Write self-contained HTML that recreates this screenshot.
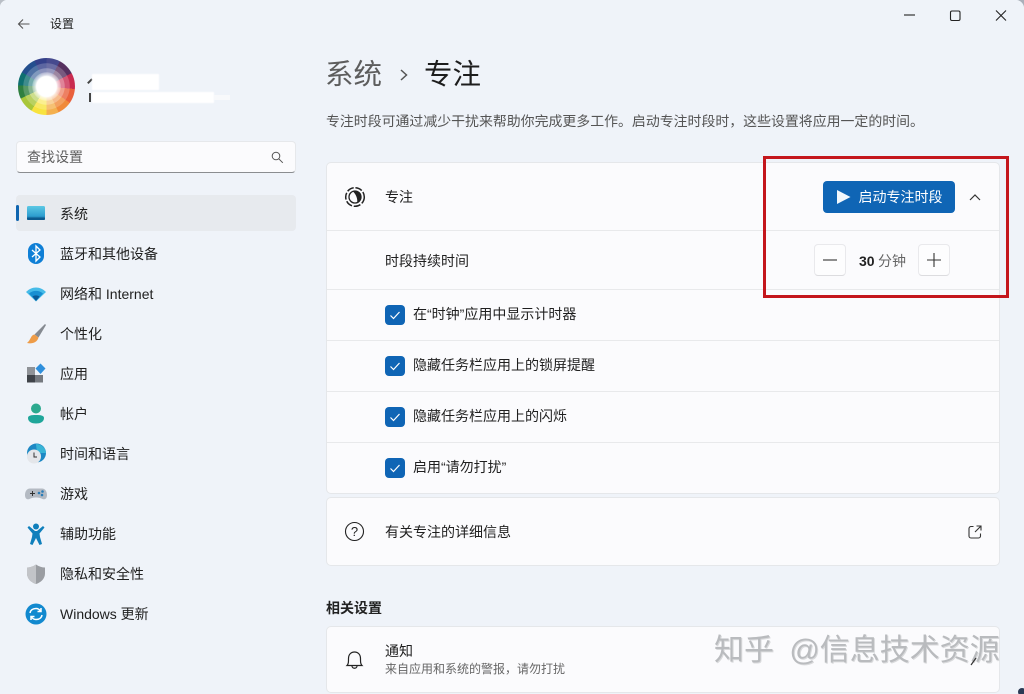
<!DOCTYPE html>
<html lang="zh"><head><meta charset="utf-8"><title>设置</title>
<style>
*{box-sizing:border-box}
html,body{margin:0;padding:0;width:1024px;height:694px;overflow:hidden}
body{position:relative;background:#eff3f9;font-family:"Liberation Sans","Noto Sans CJK SC",sans-serif;font-size:14px;color:#1f1f1f}
.t{position:absolute;white-space:nowrap;line-height:20px}
.a{position:absolute}
.card{position:absolute;left:326px;width:674px;background:#fbfbfd;border:1px solid #e5e7ea;border-radius:5px}
.hr{position:absolute;left:327px;width:672px;height:1px;background:#e8e9eb}
.cb{position:absolute;left:385px;width:20px;height:20px;background:#0f65b5;border-radius:4px}
.cb svg{display:block}
.btn{position:absolute;top:244px;width:32px;height:32px;background:#fdfdfe;border:1px solid #e9e9ec;border-bottom-color:#dcdcdf;border-radius:4px}
.nav{left:60px}
.i{position:absolute;left:24px;width:24px;height:24px}
</style></head><body>

<svg class="a" style="left:0;top:0" width="6" height="6" viewBox="0 0 6 6"><path d="M0 0H6C3 0.500 0.500 3 0 6Z" fill="#b9bec6"/></svg>
<svg class="a" style="left:1017px;top:0" width="7" height="7" viewBox="0 0 7 7"><path d="M0 0H7V7C6.500 3.500 3.500 0.500 0 0Z" fill="#aab0ba"/></svg>

<svg class="a" style="left:16px;top:15px" width="16" height="18" viewBox="0 0 16 18"><path d="M13.500 9H2.500M7 4.500L2.500 9L7 13.500" fill="none" stroke="#555" stroke-width="1.100"/></svg>
<div class="t" style="left:50px;top:14px;font-size:12px">设置</div>

<svg class="a" style="left:904px;top:9px" width="110" height="14" viewBox="0 0 110 14">
<path d="M0 6H11" stroke="#222" stroke-width="1.100"/>
<rect x="46.500" y="2" width="9.500" height="9.500" rx="1.500" fill="none" stroke="#222" stroke-width="1.100"/>
<path d="M92 1.500L102 11.500M102 1.500L92 11.500" stroke="#222" stroke-width="1.100"/></svg>

<!-- avatar -->
<div class="a" style="left:18px;top:58px;width:57px;height:57px;border-radius:50%;background:conic-gradient(#464a8e 0deg 28deg,#56305f 28deg 62deg,#c92b50 62deg 95deg,#e9603c 95deg 125deg,#f08a3a 125deg 155deg,#f4b04f 155deg 180deg,#f8e33f 180deg 212deg,#a9c63a 212deg 245deg,#2f7f3f 245deg 272deg,#0f6f70 272deg 300deg,#244f8e 300deg 335deg,#34408a 335deg 360deg)"></div>
<div class="a" style="left:18px;top:58px;width:57px;height:57px;border-radius:50%;background:radial-gradient(circle,#fff 0,#fff 10px,rgba(255,255,255,.8) 11.500px,rgba(255,255,255,.6) 14px,rgba(255,255,255,.42) 14.500px,rgba(255,255,255,.42) 18px,rgba(255,255,255,.2) 18.500px,rgba(255,255,255,.2) 23px,rgba(255,255,255,0) 23.500px)"></div>
<div class="a" style="left:89px;top:78px;width:1.500px;height:6px;background:#444;transform:rotate(45deg)"></div>
<div class="a" style="left:92px;top:74px;width:67px;height:16px;background:#fff;filter:blur(.6px)"></div>
<div class="a" style="left:89px;top:93px;width:1.500px;height:9px;background:#444"></div>
<div class="a" style="left:92px;top:92px;width:122px;height:11px;background:#fff;filter:blur(.6px)"></div>
<div class="a" style="left:214px;top:95px;width:16px;height:5px;background:#f8f9fb"></div>

<!-- search -->
<div class="a" style="left:16px;top:141px;width:280px;height:32px;background:#fbfbfd;border:1px solid #e6e8eb;border-bottom:1px solid #8b8d90;border-radius:4px"></div>
<div class="t" style="left:27px;top:147px;color:#5f5f5f">查找设置</div>
<svg class="a" style="left:271px;top:151px" width="13" height="13" viewBox="0 0 13 13"><circle cx="5" cy="5" r="3.800" fill="none" stroke="#555" stroke-width="1"/><path d="M7.800 7.800L11.800 11.800" stroke="#555" stroke-width="1"/></svg>

<!-- sidebar -->
<div class="a" style="left:16px;top:195px;width:280px;height:36px;background:#e7eaee;border-radius:4px"></div>
<div class="a" style="left:16px;top:205px;width:3px;height:16px;background:#0f65b0;border-radius:2px"></div>

<svg class="i" style="top:201px" viewBox="0 0 24 24"><defs><linearGradient id="g1" x1="0" y1="0" x2="0" y2="1"><stop offset="0" stop-color="#5cc8e4"/><stop offset=".7" stop-color="#2f9fd0"/><stop offset="1" stop-color="#0d5f95"/></linearGradient></defs><rect x="3" y="5" width="18" height="14" rx="1.500" fill="url(#g1)"/><rect x="3" y="16.500" width="18" height="2.500" rx="1" fill="#0c5a8f"/></svg>
<div class="t nav" style="top:204px">系统</div>

<svg class="i" style="top:242px" viewBox="0 0 24 24"><rect x="4" y="1" width="16" height="21" rx="8" fill="#0f7fd6"/><path d="M8 8L16 15L12 19V4L16 8L8 15" fill="none" stroke="#fff" stroke-width="1.300"/></svg>
<div class="t nav" style="top:244px">蓝牙和其他设备</div>

<svg class="i" style="top:282px" viewBox="0 0 24 24"><path d="M2 10C8 4 16 4 22 10L12 19.500Z" fill="#46bbe8"/><path d="M5 11.500C9 8 15 8 19 11.500L12 19Z" fill="#178fd2"/><path d="M8.500 14.500C10.500 13 13.500 13 15.500 14.500L12 19Z" fill="#0a5a98"/></svg>
<div class="t nav" style="top:284px">网络和 Internet</div>

<svg class="i" style="top:322px" viewBox="0 0 24 24"><path d="M21 2L22 3L14.500 15.500L10.500 12.500Z" fill="#858a91"/><path d="M10.500 12.500C6.500 13 7 18 3 21C7.500 22 13 21 14.500 15.500Z" fill="#ee9c48"/></svg>
<div class="t nav" style="top:324px">个性化</div>

<svg class="i" style="top:362px" viewBox="0 0 24 24"><rect x="3" y="5" width="8" height="8" fill="#8f9297"/><rect x="3" y="13" width="8" height="7.500" fill="#3f4349"/><rect x="11" y="13" width="8" height="7.500" fill="#75797f"/><path d="M16.500 1.500L21.500 6.500L16.500 12L11.500 6.500Z" fill="#2f8fdc"/></svg>
<div class="t nav" style="top:364px">应用</div>

<svg class="i" style="top:402px" viewBox="0 0 24 24"><circle cx="12" cy="6.500" r="5" fill="#2ca98f"/><path d="M4 16C4 13.500 7 13 12 13S20 13.500 20 16C20 20 16 21.500 12 21.500S4 20 4 16Z" fill="#1fa69a"/></svg>
<div class="t nav" style="top:404px">帐户</div>

<svg class="i" style="top:442px" viewBox="0 0 24 24"><circle cx="12.500" cy="11" r="9.500" fill="#1d88c4"/><path d="M12 2C17 2 22 6 22 11H13Z" fill="#39b4d6"/><circle cx="10" cy="14.500" r="7" fill="#e4e6ea"/><path d="M10 10.500V15H13" fill="none" stroke="#333" stroke-width="1"/></svg>
<div class="t nav" style="top:444px">时间和语言</div>

<svg class="i" style="top:482px" viewBox="0 0 24 24"><path d="M6 6.500H18C21.500 6.500 23 10 23 13C23 16.500 21 18 18.500 17C16.500 16 15 15.500 12 15.500S7.500 16 5.500 17C3 18 1 16.500 1 13C1 10 2.500 6.500 6 6.500Z" fill="#b4bac3"/><path d="M6 11.500H11M8.500 9V14" stroke="#333" stroke-width="1"/><circle cx="15" cy="11" r="1.300" fill="#2a7cb8"/><circle cx="18.500" cy="9.500" r="1.300" fill="#2a7cb8"/><circle cx="18" cy="13" r="1.300" fill="#2a7cb8"/></svg>
<div class="t nav" style="top:484px">游戏</div>

<svg class="i" style="top:522px" viewBox="0 0 24 24"><circle cx="12" cy="4.500" r="3" fill="#0f7fbc"/><path d="M3.500 5.500L5 4L11 9H13L19 4L20.500 5.500L15.500 11.500L16 15L18 22L15.500 23L12 16L8.500 23L6 22L8 15L8.500 11.500Z" fill="#0f7fbc"/></svg>
<div class="t nav" style="top:524px">辅助功能</div>

<svg class="i" style="top:562px" viewBox="0 0 24 24"><path d="M12 2.500C15 4.500 18 5.500 21 5.500V11.500C21 16.500 17 20.500 12 22C7 20.500 3 16.500 3 11.500V5.500C6 5.500 9 4.500 12 2.500Z" fill="#9a9da2"/><path d="M12 2.500V22C7 20.500 3 16.500 3 11.500V5.500C6 5.500 9 4.500 12 2.500Z" fill="#c2c4c8"/></svg>
<div class="t nav" style="top:564px">隐私和安全性</div>

<svg class="i" style="top:602px" viewBox="0 0 24 24"><circle cx="12" cy="12" r="10.500" fill="#1289cf"/><path d="M6 11C6.500 8 9 6.500 12 6.500C14 6.500 15.500 7.500 16.500 9M17 6V9.500H13.500M18 13C17.500 16 15 17.500 12 17.500C10 17.500 8.500 16.500 7.500 15M7 18V14.500H10.500" fill="none" stroke="#fff" stroke-width="1.500"/></svg>
<div class="t nav" style="top:604px">Windows 更新</div>

<!-- heading -->
<div class="t" style="left:325px;top:56px;font-size:28.500px;line-height:38px;color:#5d5d5d">系统</div>
<svg class="a" style="left:398px;top:67px" width="12" height="16" viewBox="0 0 12 16"><path d="M3 3L8.500 8L3 13" fill="none" stroke="#555" stroke-width="1.500"/></svg>
<div class="t" style="left:424px;top:56px;font-size:28.500px;line-height:38px;color:#1d1d1d">专注</div>
<div class="t" style="left:326px;top:111px;font-size:13.920px;color:#555">专注时段可通过减少干扰来帮助你完成更多工作。启动专注时段时，这些设置将应用一定的时间。</div>

<!-- main card -->
<div class="card" style="top:162px;height:332px"></div>
<div class="hr" style="top:230px"></div>
<div class="hr" style="top:289px"></div>
<div class="hr" style="top:340px"></div>
<div class="hr" style="top:391px"></div>
<div class="hr" style="top:442px"></div>

<svg class="a" style="left:344px;top:186px" width="22" height="22" viewBox="0 0 22 22"><circle cx="11" cy="11" r="9.300" fill="none" stroke="#222" stroke-width="1.500" stroke-dasharray="7 1.800"/><circle cx="11" cy="11" r="6" fill="none" stroke="#222" stroke-width="1.300"/><path d="M8.800 5.400A6 6 0 1 1 13.200 16.600C13.800 13 12 8 8.800 5.400Z" fill="#222"/></svg>
<div class="t" style="left:385px;top:187px">专注</div>

<div class="a" style="left:823px;top:181px;width:132px;height:32px;background:#0f65b5;border-radius:4px"></div>
<svg class="a" style="left:836px;top:189px" width="16" height="16" viewBox="0 0 16 16"><path d="M1 1L14.500 8L1 15Z" fill="#f1f7fc"/></svg>
<div class="t" style="left:858.500px;top:187px;color:#fff">启动专注时段</div>
<svg class="a" style="left:968px;top:191px" width="14" height="12" viewBox="0 0 14 12"><path d="M2 9L7 4L12 9" fill="none" stroke="#333" stroke-width="1.200"/></svg>

<div class="t" style="left:385px;top:251px">时段持续时间</div>
<div class="btn" style="left:814px"></div>
<svg class="a" style="left:822px;top:252px" width="16" height="16" viewBox="0 0 16 16"><path d="M1 8H15" stroke="#333" stroke-width="1.100"/></svg>
<div class="t" style="left:859px;top:251px;font-weight:700;color:#222">30</div>
<div class="t" style="left:878px;top:251px;color:#666">分钟</div>
<div class="btn" style="left:918px"></div>
<svg class="a" style="left:926px;top:252px" width="16" height="16" viewBox="0 0 16 16"><path d="M1 8H15M8 1V15" stroke="#333" stroke-width="1.100"/></svg>

<div class="cb" style="top:305px"><svg width="20" height="20" viewBox="0 0 20 20"><path d="M5.500 10.500L8.500 13.500L14.500 7" fill="none" stroke="#fff" stroke-width="1.200"/></svg></div>
<div class="t" style="left:413px;top:304px">在“时钟”应用中显示计时器</div>
<div class="cb" style="top:356px"><svg width="20" height="20" viewBox="0 0 20 20"><path d="M5.500 10.500L8.500 13.500L14.500 7" fill="none" stroke="#fff" stroke-width="1.200"/></svg></div>
<div class="t" style="left:413px;top:355px">隐藏任务栏应用上的锁屏提醒</div>
<div class="cb" style="top:407px"><svg width="20" height="20" viewBox="0 0 20 20"><path d="M5.500 10.500L8.500 13.500L14.500 7" fill="none" stroke="#fff" stroke-width="1.200"/></svg></div>
<div class="t" style="left:413px;top:406px">隐藏任务栏应用上的闪烁</div>
<div class="cb" style="top:458px"><svg width="20" height="20" viewBox="0 0 20 20"><path d="M5.500 10.500L8.500 13.500L14.500 7" fill="none" stroke="#fff" stroke-width="1.200"/></svg></div>
<div class="t" style="left:413px;top:457px">启用“请勿打扰”</div>

<!-- red box -->
<div class="a" style="left:763px;top:156px;width:246px;height:142px;border:3px solid #c4161c"></div>

<!-- info card -->
<div class="card" style="top:497px;height:69px"></div>
<svg class="a" style="left:344px;top:521px" width="21" height="21" viewBox="0 0 21 21"><circle cx="10.500" cy="10.500" r="9" fill="none" stroke="#222" stroke-width="1.100"/><text x="10.500" y="15" text-anchor="middle" font-size="13" font-family="Liberation Sans" fill="#222">?</text></svg>
<div class="t" style="left:385px;top:522px">有关专注的详细信息</div>
<svg class="a" style="left:968px;top:525px" width="14" height="14" viewBox="0 0 14 14"><path d="M5.500 1.500H3A2 2 0 0 0 1 3.500V11A2 2 0 0 0 3 13H10.500A2 2 0 0 0 12.500 11V8.500M7 7L13 1M8.500 1H13V5.500" fill="none" stroke="#333" stroke-width="1.100"/></svg>

<!-- related -->
<div class="t" style="left:326px;top:598px;font-weight:700;font-size:14px;color:#222">相关设置</div>
<div class="card" style="top:626px;height:67px"></div>
<svg class="a" style="left:344px;top:649px" width="22" height="22" viewBox="0 0 22 22"><path d="M3 16.500C4.500 15 4.500 13 4.500 9.500C4.500 5.500 7 3 10.500 3S16.500 5.500 16.500 9.500C16.500 13 16.500 15 18 16.500ZM8 17C8 20 13 20 13 17" fill="none" stroke="#222" stroke-width="1.200"/></svg>
<div class="t" style="left:385px;top:641px">通知</div>
<div class="t" style="left:385px;top:660px;font-size:12px;line-height:18px;color:#666">来自应用和系统的警报，请勿打扰</div>

<!-- watermark -->
<div class="t" style="left:714px;top:633px;font-size:30px;line-height:36px;word-spacing:7px;color:#b9bbbe;text-shadow:1px 1px 0 #d9dadc">知乎 @信息技术资源</div>
<svg class="a" style="left:970px;top:655px" width="10" height="12" viewBox="0 0 10 12"><path d="M1 10L6 3" stroke="#333" stroke-width="1.200"/></svg>
<div class="a" style="left:1018px;top:688px;width:8px;height:8px;background:#2a3a55;border-radius:50%"></div>
</body></html>
